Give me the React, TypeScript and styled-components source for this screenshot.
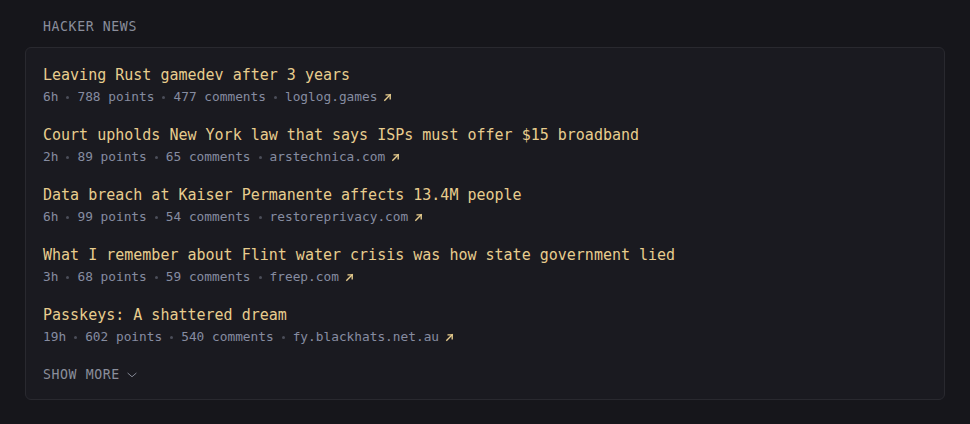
import React from 'react';
import styled, { createGlobalStyle } from 'styled-components';

const GlobalStyle = createGlobalStyle`
    html, body {
        margin: 0;
        padding: 0;
        background: #16161b;
    }
    body {
        font-family: "DejaVu Sans Mono", "Liberation Mono", monospace;
        -webkit-font-smoothing: antialiased;
    }
`;

interface Story {
    title: string;
    age: string;
    points: number;
    comments: number;
    domain: string;
}

const stories: Story[] = [
    { title: 'Leaving Rust gamedev after 3 years', age: '6h', points: 788, comments: 477, domain: 'loglog.games' },
    { title: 'Court upholds New York law that says ISPs must offer $15 broadband', age: '2h', points: 89, comments: 65, domain: 'arstechnica.com' },
    { title: 'Data breach at Kaiser Permanente affects 13.4M people', age: '6h', points: 99, comments: 54, domain: 'restoreprivacy.com' },
    { title: 'What I remember about Flint water crisis was how state government lied', age: '3h', points: 68, comments: 59, domain: 'freep.com' },
    { title: 'Passkeys: A shattered dream', age: '19h', points: 602, comments: 540, domain: 'fy.blackhats.net.au' },
];

export default function App() {
    return (
        <Page>
            <GlobalStyle />
            <Heading>Hacker News</Heading>
            <Card>
                {stories.map((s) => (
                    <Item key={s.title}>
                        <Title>{s.title}</Title>
                        <Meta>
                            <span>{s.age}</span>
                            <Dot />
                            <span>{s.points} points</span>
                            <Dot />
                            <span>{s.comments} comments</span>
                            <Dot />
                            <Domain>
                                {s.domain}
                                <ArrowIcon />
                            </Domain>
                        </Meta>
                    </Item>
                ))}
                <ShowMore>
                    Show more
                    <svg width="14" height="14" viewBox="0 0 24 24" fill="none" stroke="currentColor" strokeWidth="1.6" strokeLinecap="round" strokeLinejoin="round">
                        <path d="M5 9l7 6 7-6" />
                    </svg>
                </ShowMore>
            </Card>
        </Page>
    );
}

function ArrowIcon() {
    return (
        <svg width="9" height="9" viewBox="0 0 10 10" fill="none" stroke="#e8cd8e" strokeWidth="1.5" strokeLinecap="square">
            <path d="M2 8L8 2" />
            <path d="M3.5 2H8V6.5" />
        </svg>
    );
}

const Page = styled.div`
    padding: 17px 25px 25px;
`;

const Heading = styled.div`
    padding-left: 18px;
    margin-bottom: 10px;
    font-size: 13.2px;
    line-height: 20px;
    letter-spacing: 0.6px;
    text-transform: uppercase;
    color: #8a8e9b;
`;

const Card = styled.div`
    display: flex;
    flex-direction: column;
    gap: 18px;
    padding: 17px 17px 14px;
    background: #1a1a20;
    border: 1px solid #29292f;
    border-radius: 6px;
`;

const Item = styled.div`
    display: flex;
    flex-direction: column;
    gap: 2px;
`;

const Title = styled.div`
    font-size: 15px;
    line-height: 20px;
    color: #e8cd8e;
`;

const Meta = styled.div`
    display: flex;
    align-items: center;
    gap: 8px;
    font-size: 12.8px;
    line-height: 20px;
    color: #868ca0;
`;

const Dot = styled.span`
    width: 3px;
    height: 3px;
    border-radius: 50%;
    background: #4b4e59;
`;

const Domain = styled.span`
    display: flex;
    align-items: center;
    gap: 6px;
`;

const ShowMore = styled.div`
    display: flex;
    align-items: center;
    gap: 5px;
    font-size: 13.2px;
    line-height: 20px;
    letter-spacing: 0.6px;
    text-transform: uppercase;
    color: #8a8e9b;
`;
